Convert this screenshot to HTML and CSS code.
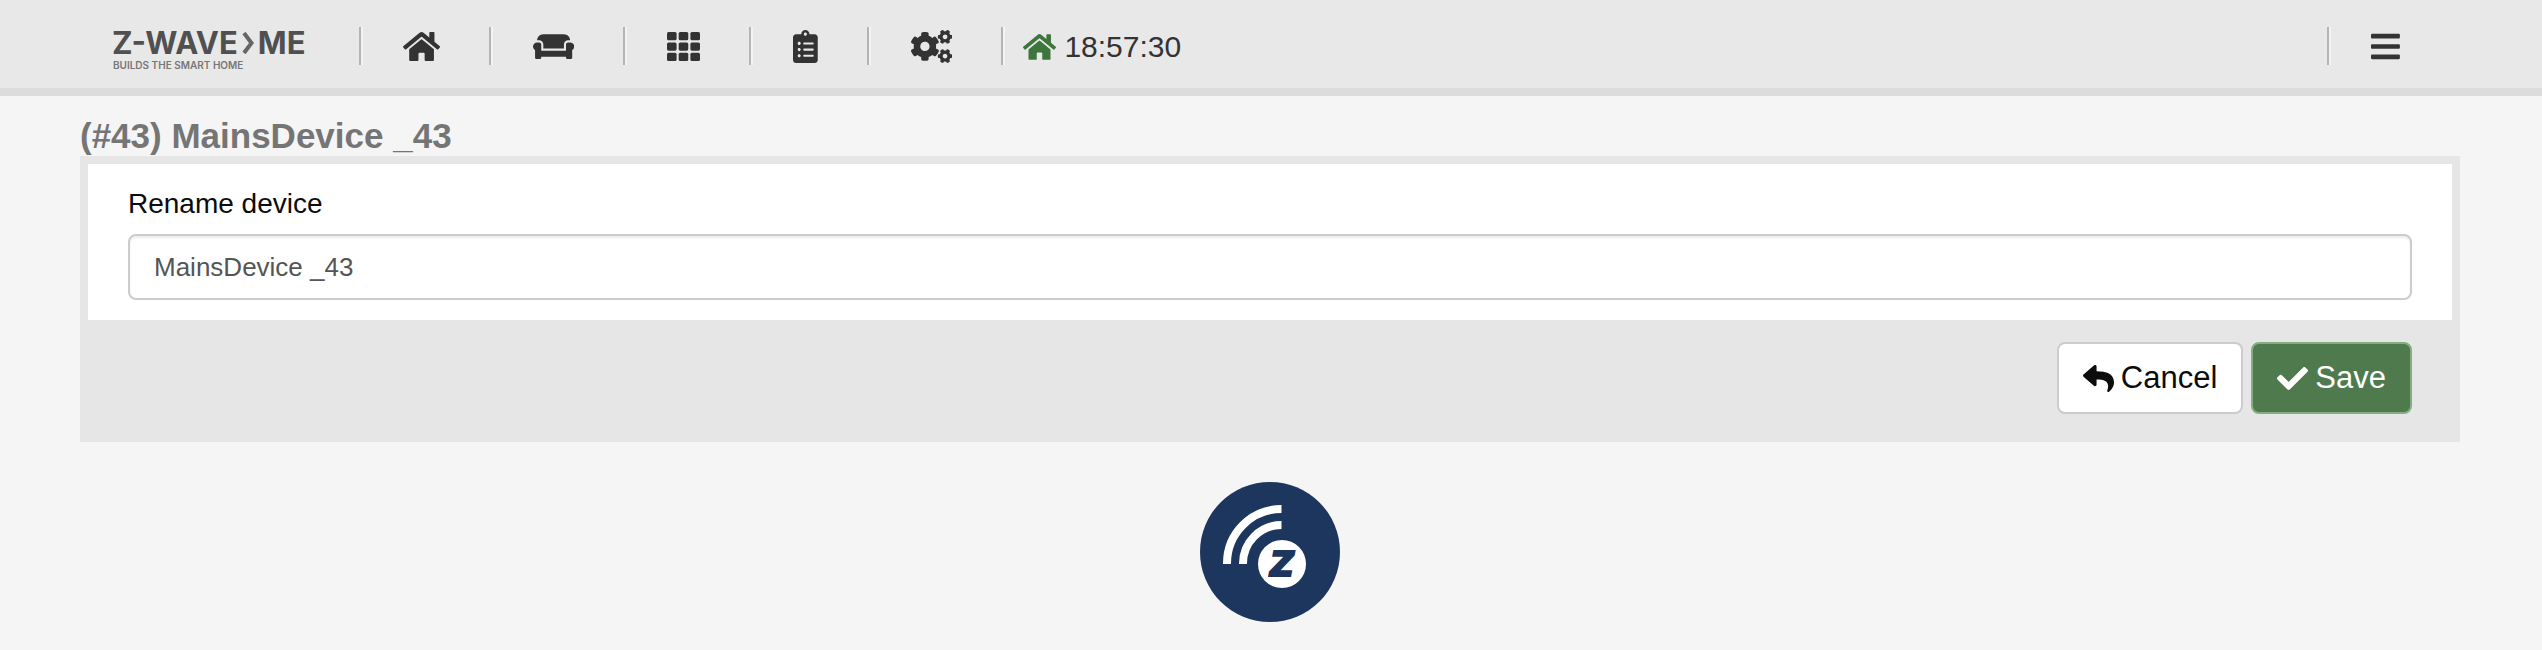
FILE: index.html
```html
<!DOCTYPE html>
<html lang="en">
<head>
    <meta charset="UTF-8">
    <meta name="viewport" content="width=device-width, initial-scale=1.0">
    <title>Z-Wave.Me</title>
    <link rel="stylesheet" href="styles.css">
</head>
<body>
    <header class="header">
        <a class="brand" href="#">
            <span class="brand-name">
                <span>Z-WAVE</span>
                <svg class="brand-arrow" viewBox="0 0 12 22"><path d="M2 1l7.500 10L2 21" fill="none" stroke="#666" stroke-width="4"/></svg>
                <span>ME</span>
            </span>
            <span class="brand-slogan">BUILDS THE SMART HOME</span>
        </a>
        <nav class="nav">
            <a class="nav-item" href="#" aria-label="Home">
                <svg class="icon" viewBox="0 0 576 512"><path d="M280.370 148.260L96 300.110V464a16 16 0 0 0 16 16l112.060-.290a16 16 0 0 0 15.920-16V368a16 16 0 0 1 16-16h64a16 16 0 0 1 16 16v95.640a16 16 0 0 0 16 16.050L464 480a16 16 0 0 0 16-16V300L295.670 148.260a12.190 12.190 0 0 0-15.300 0zM571.600 251.470L488 182.560V44.050a12 12 0 0 0-12-12h-56a12 12 0 0 0-12 12v72.610L318.470 43a48 48 0 0 0-61 0L4.340 251.470a12 12 0 0 0-1.600 16.900l25.500 31A12 12 0 0 0 45.150 301l235.220-193.740a12.190 12.190 0 0 1 15.300 0L530.900 301a12 12 0 0 0 16.900-1.600l25.500-31a12 12 0 0 0-1.700-16.930z"/></svg>
            </a>
            <a class="nav-item" href="#" aria-label="Rooms">
                <svg class="icon" viewBox="0 0 640 512"><path d="M160 224v64h320v-64c0-35.300 28.700-64 64-64h32c0-53-43-96-96-96H160c-53 0-96 43-96 96h32c35.300 0 64 28.700 64 64zm416-32h-32c-17.700 0-32 14.300-32 32v96H128v-96c0-17.700-14.300-32-32-32H64c-35.300 0-64 28.700-64 64 0 23.600 13 44 32 55.100V432c0 8.800 7.200 16 16 16h64c8.800 0 16-7.200 16-16v-16h384v16c0 8.800 7.200 16 16 16h64c8.800 0 16-7.200 16-16V311.100c19-11 32-31.500 32-55.100 0-35.300-28.700-64-64-64z"/></svg>
            </a>
            <a class="nav-item" href="#" aria-label="Elements">
                <svg class="icon" viewBox="0 0 512 512">
                    <rect x="0" y="32" width="149" height="128" rx="24"/><rect x="181" y="32" width="149" height="128" rx="24"/><rect x="363" y="32" width="149" height="128" rx="24"/>
                    <rect x="0" y="192" width="149" height="128" rx="24"/><rect x="181" y="192" width="149" height="128" rx="24"/><rect x="363" y="192" width="149" height="128" rx="24"/>
                    <rect x="0" y="352" width="149" height="128" rx="24"/><rect x="181" y="352" width="149" height="128" rx="24"/><rect x="363" y="352" width="149" height="128" rx="24"/>
                </svg>
            </a>
            <a class="nav-item" href="#" aria-label="Events">
                <svg class="icon" viewBox="0 0 384 512"><path d="M336 64h-80c0-35.300-28.700-64-64-64s-64 28.700-64 64H48C21.500 64 0 85.500 0 112v352c0 26.500 21.500 48 48 48h288c26.500 0 48-21.500 48-48V112c0-26.500-21.500-48-48-48zM96 424c-13.300 0-24-10.700-24-24s10.700-24 24-24 24 10.700 24 24-10.700 24-24 24zm0-96c-13.300 0-24-10.700-24-24s10.700-24 24-24 24 10.700 24 24-10.700 24-24 24zm0-96c-13.300 0-24-10.700-24-24s10.700-24 24-24 24 10.700 24 24-10.700 24-24 24zm96-192c13.300 0 24 10.700 24 24s-10.700 24-24 24-24-10.700-24-24 10.700-24 24-24zm128 368c0 4.400-3.600 8-8 8H168c-4.400 0-8-3.600-8-8v-16c0-4.400 3.600-8 8-8h144c4.400 0 8 3.600 8 8v16zm0-96c0 4.400-3.600 8-8 8H168c-4.400 0-8-3.600-8-8v-16c0-4.400 3.600-8 8-8h144c4.400 0 8 3.600 8 8v16zm0-96c0 4.400-3.600 8-8 8H168c-4.400 0-8-3.600-8-8v-16c0-4.400 3.600-8 8-8h144c4.400 0 8 3.600 8 8v16z"/></svg>
            </a>
            <a class="nav-item" href="#" aria-label="Automation">
                <svg class="icon" viewBox="0 0 640 512">
                    <path id="small-cog" d="M512.100 191l-8.200 14.300c-3 5.300-9.400 7.500-15.100 5.400-11.800-4.400-22.600-10.700-32.100-18.600-4.600-3.800-5.800-10.500-2.800-15.700l8.200-14.300c-6.900-8-12.300-17.300-15.900-27.400h-16.500c-6 0-11.200-4.300-12.200-10.300-2-12-2.100-24.600 0-37.100 1-6 6.200-10.400 12.200-10.400h16.500c3.600-10.100 9-19.400 15.900-27.400l-8.200-14.300c-3-5.200-1.900-11.900 2.800-15.700 9.500-7.900 20.400-14.200 32.100-18.600 5.700-2.100 12.100.1 15.100 5.400l8.200 14.300c10.500-1.900 21.200-1.900 31.700 0L552 6.300c3-5.300 9.400-7.500 15.100-5.400 11.800 4.400 22.600 10.700 32.100 18.600 4.600 3.800 5.800 10.500 2.800 15.700l-8.200 14.300c6.900 8 12.300 17.300 15.900 27.400h16.500c6 0 11.200 4.300 12.200 10.300 2 12 2.100 24.600 0 37.100-1 6-6.200 10.400-12.200 10.400h-16.500c-3.600 10.100-9 19.400-15.900 27.400l8.200 14.300c3 5.200 1.900 11.900-2.800 15.700-9.500 7.900-20.400 14.200-32.100 18.600-5.700 2.100-12.100-.1-15.100-5.400l-8.200-14.300c-10.400 1.900-21.200 1.900-31.700 0zm-10.500-58.800c38.500 29.600 82.400-14.300 52.800-52.800-38.500-29.700-82.400 14.300-52.800 52.800z"/>
                    <path d="M386.300 286.100l33.700 16.800c10.100 5.800 14.500 18.100 10.500 29.100-8.900 24.200-26.400 46.400-42.600 65.800-7.400 8.900-20.200 11.100-30.300 5.300l-29.100-16.800c-16 13.700-34.600 24.600-54.900 31.700v33.600c0 11.600-8.300 21.600-19.700 23.600-24.600 4.200-50.400 4.400-75.900 0-11.500-2-20-11.900-20-23.600V418c-20.300-7.200-38.900-18-54.900-31.700L74 403c-10 5.800-22.900 3.600-30.300-5.300-16.200-19.400-33.300-41.600-42.200-65.700-4-10.900.4-23.200 10.500-29.100l33.300-16.800c-3.900-20.900-3.900-42.400 0-63.400L12 205.800c-10.100-5.800-14.600-18.100-10.500-29 8.900-24.200 26-46.400 42.200-65.800 7.400-8.900 20.200-11.100 30.300-5.300l29.100 16.800c16-13.700 34.600-24.600 54.900-31.700V57.100c0-11.500 8.200-21.500 19.600-23.500 24.600-4.200 50.500-4.400 76-.1 11.500 2 20 11.900 20 23.600v33.600c20.300 7.200 38.900 18 54.900 31.700l29.100-16.800c10-5.800 22.900-3.600 30.300 5.300 16.200 19.400 33.200 41.600 42.100 65.800 4 10.900.1 23.200-10 29.100l-33.700 16.800c3.900 21 3.900 42.500 0 63.500zm-117.600 21.100c59.200-77-28.700-164.900-105.700-105.700-59.200 77 28.700 164.900 105.700 105.700z"/>
                    <use href="#small-cog" y="299"/>
                </svg>
            </a>
            <div class="clock">
                <svg class="icon-sm icon-green" viewBox="0 0 576 512"><path d="M280.370 148.260L96 300.110V464a16 16 0 0 0 16 16l112.060-.290a16 16 0 0 0 15.920-16V368a16 16 0 0 1 16-16h64a16 16 0 0 1 16 16v95.640a16 16 0 0 0 16 16.050L464 480a16 16 0 0 0 16-16V300L295.670 148.260a12.190 12.190 0 0 0-15.300 0zM571.600 251.470L488 182.560V44.050a12 12 0 0 0-12-12h-56a12 12 0 0 0-12 12v72.610L318.470 43a48 48 0 0 0-61 0L4.340 251.470a12 12 0 0 0-1.600 16.900l25.500 31A12 12 0 0 0 45.150 301l235.220-193.740a12.190 12.190 0 0 1 15.300 0L530.900 301a12 12 0 0 0 16.900-1.600l25.500-31a12 12 0 0 0-1.700-16.930z"/></svg>
                <span>18:57:30</span>
            </div>
        </nav>
        <button class="menu" type="button" aria-label="Menu">
            <svg class="icon" viewBox="0 0 448 512"><rect y="60" width="448" height="72" rx="16"/><rect y="220" width="448" height="72" rx="16"/><rect y="380" width="448" height="72" rx="16"/></svg>
        </button>
    </header>

    <main class="container">
        <h1 class="title">(#43) MainsDevice _43</h1>
        <form class="panel">
            <div class="panel-body">
                <label class="label" for="device-name">Rename device</label>
                <input class="input" type="text" id="device-name" value="MainsDevice _43">
            </div>
            <div class="panel-footer">
                <button class="btn" type="button">
                    <svg class="btn-icon" viewBox="0 0 512 512"><path d="M8.309 189.836L184.313 37.851C199.719 24.546 224 35.347 224 56.015v80.053c160.629 1.839 288 34.032 288 186.258 0 61.441-39.581 122.309-83.333 154.132-13.653 9.931-33.111-2.533-28.077-18.631 45.344-145.012-21.507-183.510-176.590-185.742V360c0 20.700-24.300 31.453-39.687 18.164l-176.004-152c-11.071-9.562-11.086-26.753 0-36.328z"/></svg>
                    Cancel
                </button>
                <button class="btn btn-save" type="button">
                    <svg class="btn-icon" viewBox="0 0 512 512"><path d="M173.898 439.404l-166.400-166.400c-9.997-9.997-9.997-26.206 0-36.204l36.203-36.204c9.997-9.998 26.207-9.998 36.204 0L192 312.690 432.095 72.596c9.997-9.997 26.207-9.997 36.204 0l36.203 36.204c9.997 9.997 9.997 26.206 0 36.204l-294.400 294.401c-9.998 9.997-26.207 9.997-36.204-.001z"/></svg>
                    Save
                </button>
            </div>
        </form>
    </main>

    <footer class="footer">
        <svg class="footer-logo" viewBox="0 0 140 140">
            <circle cx="70" cy="70" r="70" fill="#1d365d"/>
            <path d="M27 82A54.500 54.500 0 0 1 81.500 27M43 82A38.500 38.500 0 0 1 81.500 43" fill="none" stroke="#fff" stroke-width="8"/>
            <circle cx="82" cy="82" r="24" fill="#fff"/>
            <text class="footer-z" x="82" y="94" text-anchor="middle">Z</text>
        </svg>
    </footer>
</body>
</html>
```
FILE: styles.css
```css
* {
    box-sizing: border-box;
}
body {
    margin: 0;
    background: #f5f5f5;
    color: #0c0c0c;
    font-family: "Liberation Sans", Arial, sans-serif;
}
a {
    color: inherit;
    text-decoration: none;
}
svg {
    display: block;
    fill: currentColor;
}

/* header */
.header {
    display: flex;
    height: 96px;
    padding: 27px 82px 0 112px;
    background: #e8e8e8;
    border-bottom: 8px solid #dcdcdc;
    color: #333;
}
.brand {
    width: 247px;
    font-family: Inter, sans-serif;
    font-weight: 700;
    color: #505050;
}
.brand-name {
    display: flex;
    align-items: center;
    gap: 4px;
    height: 32px;
    font-size: 31px;
    line-height: 32px;
}
.brand-arrow {
    width: 12px;
    height: 22px;
}
.brand-slogan {
    display: block;
    padding-left: 1px;
    font-size: 10px;
    font-weight: 600;
    line-height: 12px;
    color: #777;
}
.nav {
    display: flex;
    flex: 1;
}
.nav-item, .clock, .menu {
    display: flex;
    align-items: center;
    height: 38px;
    border-left: 2px solid #b4b4b4;
    box-shadow: inset 2px 0 #f3f3f3;
}
.nav-item {
    padding: 0 49px 0 42px;
}
.clock {
    gap: 8px;
    padding: 2px 0 0 20px;
    font-size: 30px;
}
.menu {
    padding: 0 60px 0 42px;
    border-width: 0 0 0 2px;
    background: none;
    color: inherit;
    cursor: pointer;
}
.icon {
    height: 33px;
}
.icon-sm {
    width: 33px;
    height: 30px;
}
.icon-green {
    color: #3c763d;
}

/* rename form */
.container {
    padding: 20px 82px 0 80px;
}
.title {
    margin: 0;
    font-size: 35px;
    line-height: 40px;
    color: #757575;
}
.panel {
    padding: 8px;
    background: #e6e6e6;
}
.panel-body {
    padding: 24px 40px 20px;
    background: #fff;
}
.label {
    display: block;
    margin-bottom: 14px;
    font-size: 28px;
    line-height: 32px;
}
.input {
    display: block;
    width: 100%;
    height: 66px;
    padding: 0 24px;
    border: 2px solid #ccc;
    border-radius: 8px;
    background: #fff;
    box-shadow: inset 0 2px 2px rgba(0, 0, 0, 0.075);
    color: #555;
    font-family: inherit;
    font-size: 26px;
}
.panel-footer {
    display: flex;
    justify-content: flex-end;
    gap: 8px;
    padding: 22px 40px 20px;
}
.btn {
    display: flex;
    align-items: center;
    gap: 7px;
    height: 72px;
    padding: 0 24px;
    border: 2px solid #ccc;
    border-radius: 8px;
    background: #fff;
    color: #0c0c0c;
    font-family: inherit;
    font-size: 31px;
    cursor: pointer;
}
.btn-save {
    border-color: #83ae84;
    background: #4e7a4e;
    color: #fff;
}
.btn-icon {
    width: 31px;
    height: 31px;
}

/* footer */
.footer {
    display: flex;
    justify-content: center;
    padding: 40px 82px 28px 80px;
}
.footer-logo {
    width: 140px;
    height: 140px;
}
.footer-z {
    fill: #1d365d;
    stroke: #1d365d;
    stroke-width: 2px;
    font-family: "DejaVu Sans", sans-serif;
    font-size: 33px;
    font-style: italic;
    font-weight: 700;
}
```
